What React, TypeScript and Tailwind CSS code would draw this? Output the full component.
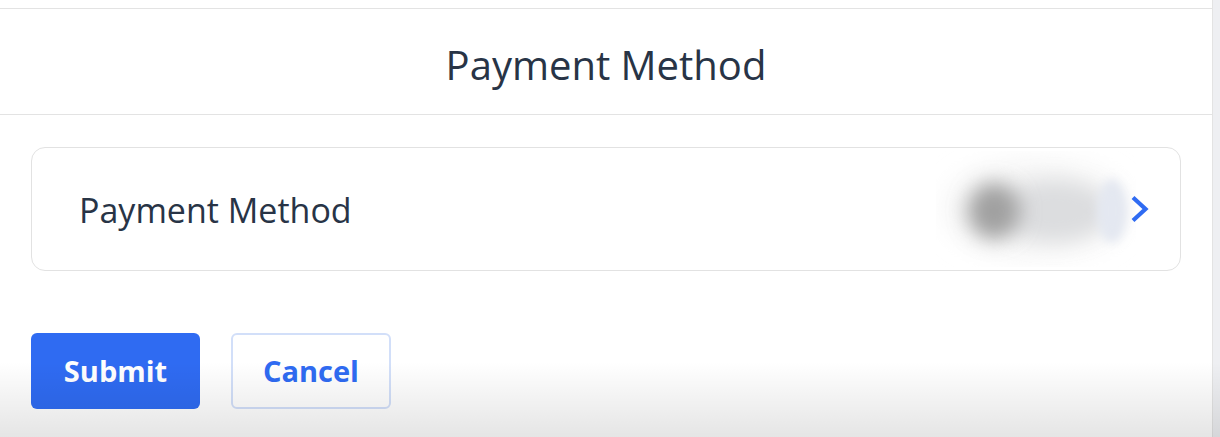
import React from "react";

export default function App() {
  const font = { fontFamily: '"Open Sans", "Noto Sans", sans-serif' };
  return (
    <div className="relative flex w-[1220px] h-[437px] overflow-hidden bg-white" style={font}>
      <div className="w-[1213px] border-r border-[#e3e3e3] pt-[8px]">
        <div className="flex h-[107px] items-center justify-center border-t border-b border-[#e3e3e3]">
          <h1 className="text-[40px] text-[#283446] leading-none pt-[6px]">Payment Method</h1>
        </div>
        <div className="px-[31px] pt-[32px]">
          <div className="flex h-[124px] items-center rounded-[14px] border border-[#e2e2e2] pl-[47px] pr-[31px]">
            <span className="text-[34px] text-[#283446] leading-none pt-[2px]">Payment Method</span>
            <div className="ml-auto flex items-center">
              <svg width="200" height="116" viewBox="0 0 200 116" className="mr-[-6px]">
                <defs>
                  <filter id="b1" x="-50%" y="-50%" width="200%" height="200%">
                    <feGaussianBlur stdDeviation="14" />
                  </filter>
                  <filter id="b2" x="-50%" y="-50%" width="200%" height="200%">
                    <feGaussianBlur stdDeviation="10" />
                  </filter>
                  <filter id="b3" x="-50%" y="-50%" width="200%" height="200%">
                    <feGaussianBlur stdDeviation="5" />
                  </filter>
                </defs>
                <ellipse cx="100" cy="58" rx="90" ry="46" fill="#f3f3f3" filter="url(#b1)" />
                <ellipse cx="118" cy="60" rx="55" ry="30" fill="#dcdddf" filter="url(#b2)" />
                <ellipse cx="58" cy="60" rx="26" ry="28" fill="#a0a0a0" filter="url(#b2)" />
                <ellipse cx="176" cy="60" rx="15" ry="32" fill="#e4e8f1" filter="url(#b3)" />
              </svg>
              <svg width="19" height="28" viewBox="0 0 19 28">
                <polyline points="3,2.5 15.5,14 3,25.5" fill="none" stroke="#2f6bf2" strokeWidth="4.2" />
              </svg>
            </div>
          </div>
          <div className="mt-[62px] flex gap-[31px]">
            <button className="flex h-[76px] w-[169px] items-center justify-center rounded-[6px] bg-[#2f6bf2] text-[29px] font-bold text-white">
              Submit
            </button>
            <button className="flex h-[76px] w-[160px] items-center justify-center rounded-[6px] border-2 border-[#d2dff9] bg-white text-[29px] font-bold text-[#2f6bf2]">
              Cancel
            </button>
          </div>
        </div>
      </div>
      <div className="flex-1 bg-[#eeeff2]" />
      <div className="pointer-events-none absolute bottom-0 left-0 right-0 h-[75px] bg-gradient-to-b from-transparent to-[rgba(0,0,0,0.1)]" />
    </div>
  );
}
